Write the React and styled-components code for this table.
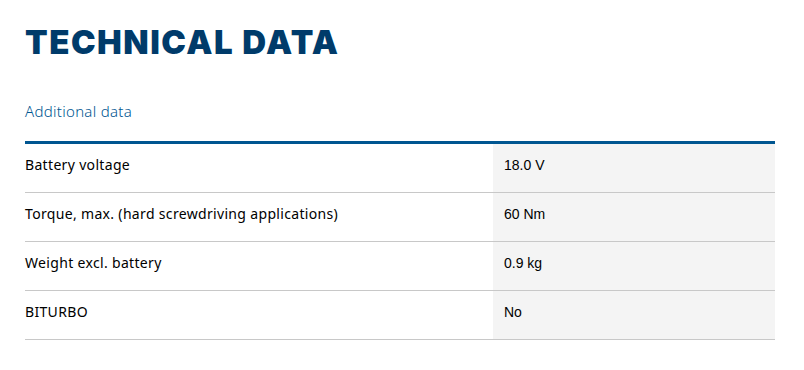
import React from "react";
import styled, { createGlobalStyle } from "styled-components";

const Global = createGlobalStyle`
  html, body { margin: 0; padding: 0; background: #fff; }
  body { font-family: "Liberation Sans", Arial, sans-serif; }
`;

const Page = styled.div`
  padding: 22px 29px 0 25px;
  width: 750px;
`;

const Title = styled.h1`
  margin: 0;
  font-family: Inter, "Liberation Sans", sans-serif;
  font-weight: 900;
  font-size: 33px;
  line-height: 40px;
  color: #003b6a;
  letter-spacing: 1.5px;
`;

const Subtitle = styled.h2`
  margin: 39px 0 0;
  font-family: "Noto Sans", "Liberation Sans", sans-serif;
  font-weight: 300;
  font-size: 15px;
  line-height: 20px;
  letter-spacing: 0.3px;
  color: #005691;
`;

const Table = styled.div`
  margin-top: 20px;
  border-top: 3px solid #005691;
`;

const Row = styled.div`
  display: grid;
  grid-template-columns: 468px 1fr;
  border-bottom: 1px solid #c8c8c8;
  height: 48px;
`;

const Cell = styled.div`
  display: flex;
  align-items: center;
  padding-bottom: 6px;
  box-sizing: border-box;
  font-family: ${(p) =>
    p.$value ? `"Liberation Sans", Arial, sans-serif` : `"Noto Sans", "Liberation Sans", sans-serif`};
  font-size: 14px;
  line-height: 20px;
  letter-spacing: ${(p) => (p.$value ? "0" : "0.33px")};
  color: #000;
  padding-left: ${(p) => (p.$value ? "11px" : "0")};
  background: ${(p) => (p.$value ? "#f4f4f4" : "transparent")};
`;

const rows = [
  ["Battery voltage", "18.0 V"],
  ["Torque, max. (hard screwdriving applications)", "60 Nm"],
  ["Weight excl. battery", "0.9 kg"],
  ["BITURBO", "No"],
];

export default function App() {
  return (
    <>
      <Global />
      <Page>
        <Title>TECHNICAL DATA</Title>
        <Subtitle>Additional data</Subtitle>
        <Table>
          {rows.map(([k, v]) => (
            <Row key={k}>
              <Cell>{k}</Cell>
              <Cell $value>{v}</Cell>
            </Row>
          ))}
        </Table>
      </Page>
    </>
  );
}
